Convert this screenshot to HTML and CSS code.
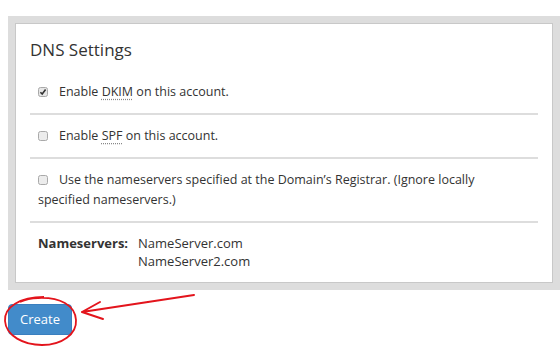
FILE: index.html
```html
<!DOCTYPE html>
<html lang="en">
<head>
<meta charset="utf-8">
<title>DNS Settings</title>
<link rel="stylesheet" href="styles.css">
</head>
<body>
<div class="page">
  <div class="outer">
    <section class="panel">
      <h2 class="title">DNS Settings</h2>
      <div class="row">
        <label class="opt"><svg class="cb" width="10" height="10" viewBox="0 0 10 10"><rect x="0.5" y="0.5" width="9" height="9" rx="2" fill="#e6e6e6" stroke="#a9a9a9"/><path d="M2.4 5.2 L4.2 7 L7.6 2.6" fill="none" stroke="#333" stroke-width="1.6"/></svg>Enable <abbr title="DomainKeys Identified Mail">DKIM</abbr> on this account.</label>
      </div>
      <div class="row">
        <label class="opt"><svg class="cb" width="10" height="10" viewBox="0 0 10 10"><rect x="0.5" y="0.5" width="9" height="9" rx="2" fill="#ececec" stroke="#a9a9a9"/></svg>Enable <abbr title="Sender Policy Framework">SPF</abbr> on this account.</label>
      </div>
      <div class="row">
        <label class="opt"><svg class="cb" width="10" height="10" viewBox="0 0 10 10"><rect x="0.5" y="0.5" width="9" height="9" rx="2" fill="#ececec" stroke="#a9a9a9"/></svg>Use the nameservers specified at the Domain’s Registrar. (Ignore locally specified nameservers.)</label>
      </div>
      <div class="ns">
        <div class="ns-label">Nameservers:</div>
        <div class="ns-values">
          <div>NameServer.com</div>
          <div>NameServer2.com</div>
        </div>
      </div>
    </section>
  </div>
  <div class="actions">
    <button class="btn" type="button">Create</button>
  </div>
  <svg class="marks" width="560" height="346" viewBox="0 0 560 346">
    <path d="M44 297 C 20 297, 4 307, 5 321 C 6 336, 24 345, 42 345 C 62 345, 77 334, 76 320 C 75 305, 60 297, 38 298 C 30 298, 24 300, 20 302" fill="none" stroke="#e3141c" stroke-width="1.8"/>
    <path d="M194 295 L82 312 M82 312 L100 302 M82 312 L103 319" fill="none" stroke="#e3141c" stroke-width="2" stroke-linecap="round"/>
  </svg>
</div>
</body>
</html>
```

FILE: styles.css
```css
html, body {
  margin: 0;
  padding: 0;
  background: #fff;
}

body {
  font-family: "Open Sans", "Liberation Sans", sans-serif;
  font-size: 13px;
  color: #333;
}

.page {
  position: relative;
  width: 560px;
  height: 346px;
  padding: 16px 0 0 8px;
  box-sizing: border-box;
  overflow: hidden;
}

.outer {
  background: #dddddd;
  padding: 7px;
}

.panel {
  background: #fff;
  border: 1px solid #c8c8c8;
  padding: 16px 14px 12px 14px;
}

.title {
  margin: 0 0 11px 0;
  font-size: 17px;
  font-weight: 400;
  line-height: 20px;
  color: #333;
}

.row {
  padding: 11px 20px 11px 8px;
  border-bottom: 2px solid #dddddd;
  line-height: 20px;
  font-size: 12.5px;
}

.opt {
  display: block;
}

.cb {
  display: inline-block;
  vertical-align: -1px;
  margin-right: 11px;
}

abbr {
  text-decoration: underline dotted #888;
  text-underline-offset: 3px;
}

.ns {
  display: flex;
  gap: 10px;
  padding: 11px 8px 0 8px;
  line-height: 18px;
}

.ns-label {
  font-weight: 700;
}

.actions {
  margin-top: 14px;
}

.btn {
  font-family: "Open Sans", "Liberation Sans", sans-serif;
  font-size: 13px;
  line-height: 19px;
  color: #fff;
  background: #428bca;
  border: 1px solid #3a7fbf;
  border-radius: 4px;
  padding: 5px 11px;
  cursor: pointer;
}

.marks {
  position: absolute;
  left: 0;
  top: 0;
  pointer-events: none;
}
```
